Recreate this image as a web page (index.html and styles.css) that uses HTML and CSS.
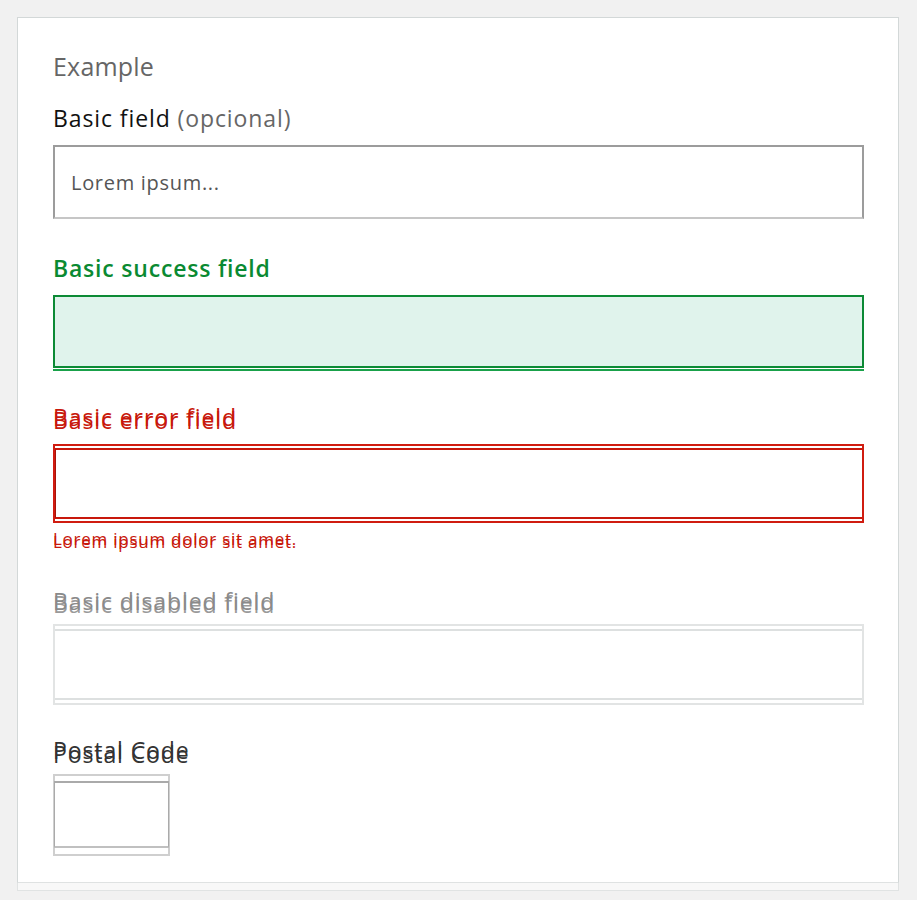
FILE: index.html
```html
<!DOCTYPE html>
<html lang="es">
<head>
<meta charset="utf-8">
<title>Example</title>
<link rel="stylesheet" href="styles.css">
</head>
<body>
<div class="card">
  <div class="title">Example</div>

  <div class="field">
    <label class="label">Basic field <span class="optional">(opcional)</span></label>
    <div class="control control-basic"><div class="input"><span class="placeholder">Lorem ipsum...</span></div></div>
  </div>

  <div class="field">
    <label class="label label-success">Basic success field</label>
    <div class="control control-success"><div class="input"></div></div>
  </div>

  <div class="field field-error">
    <label class="label label-error">Basic error field</label>
    <div class="control control-error"><div class="input"></div></div>
    <div class="message">Lorem ipsum dolor sit amet.</div>
  </div>

  <div class="field">
    <label class="label label-disabled">Basic disabled field</label>
    <div class="control control-disabled"><div class="input"></div></div>
  </div>

  <div class="field">
    <label class="label label-postal">Postal Code</label>
    <div class="control control-postal"><div class="input"></div></div>
  </div>
</div>
<div class="card-foot"></div>
</body>
</html>
```
FILE: styles.css
```css
html, body {
  margin: 0;
  padding: 0;
}
body {
  background: #f1f1f1;
  font-family: "Open Sans", "Liberation Sans", sans-serif;
  padding: 17px 18px 0 17px;
}
.card {
  background: #fff;
  border: 1px solid #d3d8d8;
  border-bottom-color: #dfe2e2;
  padding: 33px 34px 26px 35px;
}
.card-foot {
  height: 7px;
  background: #f8f8f8;
  border: 1px solid #e0e3e3;
  border-top: none;
}
.title {
  font-size: 25px;
  line-height: 30px;
  letter-spacing: 0.2px;
  color: #666;
  margin-bottom: 24px;
}
.field {
  margin-bottom: 36px;
}
.field:last-child {
  margin-bottom: 0;
}
.label {
  display: block;
  font-size: 23px;
  line-height: 26px;
  letter-spacing: 0.9px;
  color: #111;
  margin-bottom: 14px;
}
.optional {
  color: #666;
}
.label-success {
  color: #0a8a32;
  font-weight: 600;
  letter-spacing: 0.8px;
}
.label-error {
  color: #c8180c;
  text-shadow: 0 3px 0 #c8180c;
  font-weight: 500;
  margin-top: -3px;
  margin-bottom: 14px;
}
.label-disabled {
  color: #8a8a8a;
  text-shadow: 0 3px 0 #9a9a9a;
  margin-bottom: 12px;
  position: relative;
  top: 2px;
}
.label-postal {
  color: #333;
  text-shadow: 0 -4px 0 #333;
  margin-top: 3px;
  margin-bottom: 7px;
}
.control,
.input {
  box-sizing: border-box;
}
.control-basic {
  border: 2px solid #9c9c9c;
  border-bottom: 2px solid #c6c6c6;
}
.control-basic .input {
  height: 70px;
  display: flex;
  align-items: center;
  padding-left: 16px;
}
.placeholder {
  font-size: 20px;
  letter-spacing: 0.7px;
  color: #555;
}
.control-success {
  border-bottom: 2px solid #19a14a;
  padding-bottom: 1px;
}
.control-success .input {
  height: 73px;
  background: #e0f3ec;
  border: 2px solid #0c8a35;
}
.control-error {
  border: 2px solid #d01c10;
  padding: 2px 0;
}
.control-error .input {
  height: 71px;
  border-top: 2px solid #c8180c;
  border-bottom: 2px solid #c8180c;
  border-left: 1px solid #a8140a;
}
.field-error .message {
  font-size: 17px;
  line-height: 22px;
  letter-spacing: 0.75px;
  color: #c8180c;
  text-shadow: 0 3px 0 #c8180c;
  margin-top: 5px;
  margin-bottom: 0;
}
.control-disabled {
  border: 2px solid #e2e4e4;
  padding: 3px 0;
}
.control-disabled .input {
  height: 71px;
  border-top: 2px solid #dde0e0;
  border-bottom: 2px solid #dde0e0;
}
.control-postal {
  width: 117px;
  border: 2px solid #cfcfcf;
  padding: 5px 0 6px;
}
.control-postal .input {
  height: 67px;
  border-top: 2px solid #aaa;
  border-bottom: 2px solid #c0c0c0;
  border-left: 1px solid #aaa;
  border-right: 1px solid #aaa;
  margin: 0 -1px;
}
```
